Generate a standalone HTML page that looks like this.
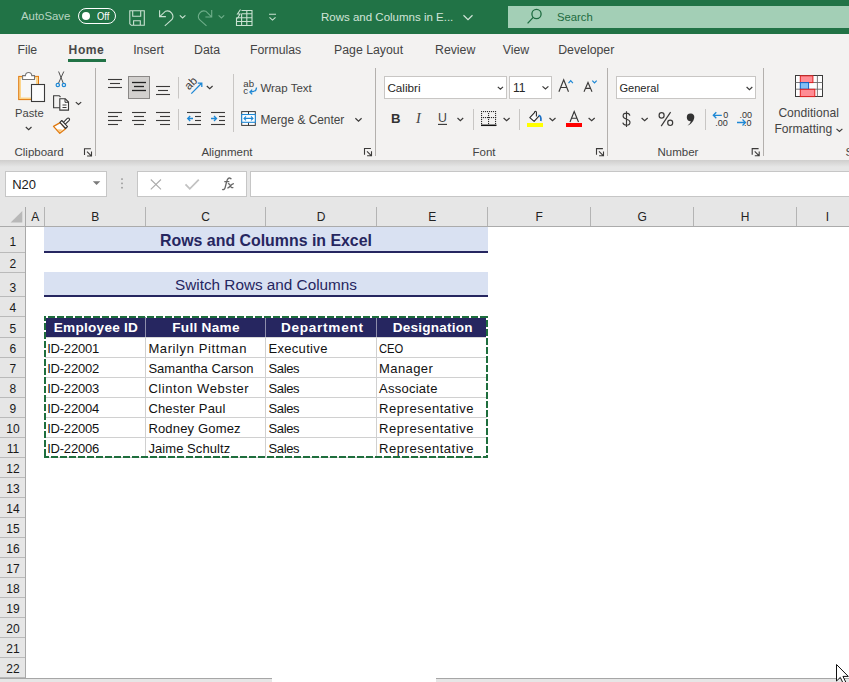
<!DOCTYPE html>
<html><head><meta charset="utf-8">
<style>
*{margin:0;padding:0;box-sizing:border-box}
html,body{width:849px;height:682px;overflow:hidden;background:#fff;font-family:"Liberation Sans",sans-serif}
.a{position:absolute}
.t{position:absolute;white-space:nowrap;line-height:1}
svg{position:absolute;left:0;top:0}
</style></head><body>
<div class="a" style="left:0px;top:0px;width:849px;height:34px;background:#217346;"></div>
<div class="a" style="left:0px;top:34px;width:849px;height:126px;background:#f3f2f1;"></div>
<div class="a" style="left:0px;top:160px;width:849px;height:7px;background:linear-gradient(#cfcecd,#e6e6e6);"></div>
<div class="a" style="left:0px;top:167px;width:849px;height:40px;background:#e6e6e6;"></div>
<div class="a" style="left:508px;top:6px;width:341px;height:22px;background:#a3cfb6;"></div>
<div class="a" style="left:78px;top:8px;width:38px;height:16px;background:transparent;border:1.4px solid #fff;border-radius:8px;"></div>
<div class="a" style="left:81.5px;top:12px;width:8px;height:8px;background:#fff;border-radius:50%;"></div>
<div class="t" style="left:21.00px;top:11.05px;font-size:11.4px;color:#b8d5c2;">AutoSave</div>
<div class="t" style="left:97.20px;top:12.37px;font-size:10.2px;color:#fff;transform-origin:0 0;transform: scaleX(0.92);">Off</div>
<div class="t" style="left:321.00px;top:11.87px;font-size:11.5px;color:#d2e5d9;">Rows and Columns in E...</div>
<div class="t" style="left:557.00px;top:12.03px;font-size:11.3px;color:#1d6b40;">Search</div>
<div class="t" style="left:17.40px;top:43.99px;font-size:12.3px;color:#444;">File</div>
<div class="t" style="left:133.20px;top:43.99px;font-size:12.3px;color:#444;">Insert</div>
<div class="t" style="left:194.00px;top:43.99px;font-size:12.3px;color:#444;">Data</div>
<div class="t" style="left:250.00px;top:43.99px;font-size:12.3px;color:#444;">Formulas</div>
<div class="t" style="left:334.00px;top:43.99px;font-size:12.3px;color:#444;">Page Layout</div>
<div class="t" style="left:435.00px;top:43.99px;font-size:12.3px;color:#444;">Review</div>
<div class="t" style="left:502.80px;top:43.99px;font-size:12.3px;color:#444;">View</div>
<div class="t" style="left:558.20px;top:43.99px;font-size:12.3px;color:#444;">Developer</div>
<div class="t" style="left:68.60px;top:44.16px;font-size:12.1px;color:#484848;font-weight:bold;letter-spacing:0.55px;">Home</div>
<div class="a" style="left:68px;top:59px;width:38px;height:3px;background:#217346;"></div>
<div class="t" style="left:15.00px;top:107.52px;font-size:11.2px;color:#444;">Paste</div>
<div class="t" style="left:14.50px;top:147.27px;font-size:11.5px;color:#444;">Clipboard</div>
<div class="t" style="left:201.40px;top:147.27px;font-size:11.5px;color:#444;">Alignment</div>
<div class="t" style="left:472.50px;top:147.27px;font-size:11.5px;color:#444;">Font</div>
<div class="t" style="left:657.50px;top:147.27px;font-size:11.5px;color:#444;">Number</div>
<div class="t" style="left:260.40px;top:82.67px;font-size:11.5px;color:#444;">Wrap Text</div>
<div class="t" style="left:260.40px;top:114.93px;font-size:11.9px;color:#444;">Merge &amp; Center</div>
<div class="t" style="left:778.40px;top:107.06px;font-size:12.1px;color:#444;">Conditional</div>
<div class="t" style="left:774.40px;top:123.26px;font-size:12.1px;color:#444;">Formatting</div>
<div class="a" style="left:384px;top:76px;width:123px;height:23px;background:#fff;border:1px solid #c8c6c4;"></div>
<div class="a" style="left:509px;top:76px;width:43px;height:23px;background:#fff;border:1px solid #c8c6c4;"></div>
<div class="a" style="left:616px;top:76px;width:140px;height:23px;background:#fff;border:1px solid #c8c6c4;"></div>
<div class="t" style="left:387.40px;top:82.00px;font-size:11.7px;color:#262626;">Calibri</div>
<div class="t" style="left:513.00px;top:81.84px;font-size:12px;color:#262626;">11</div>
<div class="t" style="left:619.40px;top:82.90px;font-size:11.1px;color:#262626;">General</div>
<div class="a" style="left:95px;top:68px;width:1px;height:88px;background:#b3b0ad;"></div>
<div class="a" style="left:375px;top:68px;width:1px;height:88px;background:#b3b0ad;"></div>
<div class="a" style="left:607px;top:68px;width:1px;height:88px;background:#b3b0ad;"></div>
<div class="a" style="left:763px;top:68px;width:1px;height:88px;background:#b3b0ad;"></div>
<div class="a" style="left:233px;top:74px;width:1px;height:58px;background:#c8c6c4;"></div>
<div class="a" style="left:5px;top:171px;width:102px;height:26px;background:#fff;border:1px solid #c6c6c6;"></div>
<div class="a" style="left:137px;top:171px;width:110px;height:26px;background:#fff;border:1px solid #c6c6c6;"></div>
<div class="a" style="left:250px;top:171px;width:599px;height:26px;background:#fff;border:1px solid #c6c6c6;border-right:none;"></div>
<div class="t" style="left:12.20px;top:178.00px;font-size:13px;color:#1a1a1a;">N20</div>
<div class="a" style="left:0px;top:207px;width:849px;height:20px;background:#e6e6e6;border-bottom:1px solid #ababab;"></div>
<div class="a" style="left:0px;top:227px;width:26px;height:455px;background:#e6e6e6;border-right:1px solid #a9a9a9;"></div>
<div class="a" style="left:25px;top:207px;width:1px;height:20px;background:#a9a9a9;"></div>
<div class="t" style="left:35.20px;top:210.64px;font-size:12px;color:#222;transform:translateX(-50%);">A</div>
<div class="t" style="left:95.20px;top:210.64px;font-size:12px;color:#222;transform:translateX(-50%);">B</div>
<div class="a" style="left:44px;top:207px;width:1px;height:19px;background:#b4b4b4;"></div>
<div class="t" style="left:205.70px;top:210.64px;font-size:12px;color:#222;transform:translateX(-50%);">C</div>
<div class="a" style="left:145px;top:207px;width:1px;height:19px;background:#b4b4b4;"></div>
<div class="t" style="left:321.20px;top:210.64px;font-size:12px;color:#222;transform:translateX(-50%);">D</div>
<div class="a" style="left:265px;top:207px;width:1px;height:19px;background:#b4b4b4;"></div>
<div class="t" style="left:432.20px;top:210.64px;font-size:12px;color:#222;transform:translateX(-50%);">E</div>
<div class="a" style="left:376px;top:207px;width:1px;height:19px;background:#b4b4b4;"></div>
<div class="t" style="left:539.20px;top:210.64px;font-size:12px;color:#222;transform:translateX(-50%);">F</div>
<div class="a" style="left:487px;top:207px;width:1px;height:19px;background:#b4b4b4;"></div>
<div class="t" style="left:642.20px;top:210.64px;font-size:12px;color:#222;transform:translateX(-50%);">G</div>
<div class="a" style="left:590px;top:207px;width:1px;height:19px;background:#b4b4b4;"></div>
<div class="t" style="left:745.20px;top:210.64px;font-size:12px;color:#222;transform:translateX(-50%);">H</div>
<div class="a" style="left:693px;top:207px;width:1px;height:19px;background:#b4b4b4;"></div>
<div class="t" style="left:827.50px;top:210.64px;font-size:12px;color:#222;transform:translateX(-50%);">I</div>
<div class="a" style="left:796px;top:207px;width:1px;height:19px;background:#b4b4b4;"></div>
<div class="a" style="left:0px;top:252px;width:25px;height:1px;background:#bababa;"></div>
<div class="t" style="left:12.90px;top:236.34px;font-size:12px;color:#1a1a1a;transform:translateX(-50%);">1</div>
<div class="a" style="left:0px;top:272px;width:25px;height:1px;background:#bababa;"></div>
<div class="t" style="left:12.90px;top:257.54px;font-size:12px;color:#1a1a1a;transform:translateX(-50%);">2</div>
<div class="a" style="left:0px;top:296px;width:25px;height:1px;background:#bababa;"></div>
<div class="t" style="left:12.90px;top:281.54px;font-size:12px;color:#1a1a1a;transform:translateX(-50%);">3</div>
<div class="a" style="left:0px;top:316px;width:25px;height:1px;background:#bababa;"></div>
<div class="t" style="left:12.90px;top:301.54px;font-size:12px;color:#1a1a1a;transform:translateX(-50%);">4</div>
<div class="a" style="left:0px;top:337px;width:25px;height:1px;background:#bababa;"></div>
<div class="t" style="left:12.90px;top:322.54px;font-size:12px;color:#1a1a1a;transform:translateX(-50%);">5</div>
<div class="a" style="left:0px;top:357px;width:25px;height:1px;background:#bababa;"></div>
<div class="t" style="left:12.90px;top:342.54px;font-size:12px;color:#1a1a1a;transform:translateX(-50%);">6</div>
<div class="a" style="left:0px;top:377px;width:25px;height:1px;background:#bababa;"></div>
<div class="t" style="left:12.90px;top:362.54px;font-size:12px;color:#1a1a1a;transform:translateX(-50%);">7</div>
<div class="a" style="left:0px;top:397px;width:25px;height:1px;background:#bababa;"></div>
<div class="t" style="left:12.90px;top:382.54px;font-size:12px;color:#1a1a1a;transform:translateX(-50%);">8</div>
<div class="a" style="left:0px;top:417px;width:25px;height:1px;background:#bababa;"></div>
<div class="t" style="left:12.90px;top:402.54px;font-size:12px;color:#1a1a1a;transform:translateX(-50%);">9</div>
<div class="a" style="left:0px;top:437px;width:25px;height:1px;background:#bababa;"></div>
<div class="t" style="left:12.90px;top:422.54px;font-size:12px;color:#1a1a1a;transform:translateX(-50%);">10</div>
<div class="a" style="left:0px;top:457px;width:25px;height:1px;background:#bababa;"></div>
<div class="t" style="left:12.90px;top:442.54px;font-size:12px;color:#1a1a1a;transform:translateX(-50%);">11</div>
<div class="a" style="left:0px;top:477px;width:25px;height:1px;background:#bababa;"></div>
<div class="t" style="left:12.90px;top:462.54px;font-size:12px;color:#1a1a1a;transform:translateX(-50%);">12</div>
<div class="a" style="left:0px;top:497px;width:25px;height:1px;background:#bababa;"></div>
<div class="t" style="left:12.90px;top:482.54px;font-size:12px;color:#1a1a1a;transform:translateX(-50%);">13</div>
<div class="a" style="left:0px;top:517px;width:25px;height:1px;background:#bababa;"></div>
<div class="t" style="left:12.90px;top:502.54px;font-size:12px;color:#1a1a1a;transform:translateX(-50%);">14</div>
<div class="a" style="left:0px;top:537px;width:25px;height:1px;background:#bababa;"></div>
<div class="t" style="left:12.90px;top:522.54px;font-size:12px;color:#1a1a1a;transform:translateX(-50%);">15</div>
<div class="a" style="left:0px;top:557px;width:25px;height:1px;background:#bababa;"></div>
<div class="t" style="left:12.90px;top:542.54px;font-size:12px;color:#1a1a1a;transform:translateX(-50%);">16</div>
<div class="a" style="left:0px;top:577px;width:25px;height:1px;background:#bababa;"></div>
<div class="t" style="left:12.90px;top:562.54px;font-size:12px;color:#1a1a1a;transform:translateX(-50%);">17</div>
<div class="a" style="left:0px;top:597px;width:25px;height:1px;background:#bababa;"></div>
<div class="t" style="left:12.90px;top:582.54px;font-size:12px;color:#1a1a1a;transform:translateX(-50%);">18</div>
<div class="a" style="left:0px;top:617px;width:25px;height:1px;background:#bababa;"></div>
<div class="t" style="left:12.90px;top:602.54px;font-size:12px;color:#1a1a1a;transform:translateX(-50%);">19</div>
<div class="a" style="left:0px;top:637px;width:25px;height:1px;background:#bababa;"></div>
<div class="t" style="left:12.90px;top:622.54px;font-size:12px;color:#1a1a1a;transform:translateX(-50%);">20</div>
<div class="a" style="left:0px;top:657px;width:25px;height:1px;background:#bababa;"></div>
<div class="t" style="left:12.90px;top:642.54px;font-size:12px;color:#1a1a1a;transform:translateX(-50%);">21</div>
<div class="a" style="left:0px;top:677px;width:25px;height:1px;background:#bababa;"></div>
<div class="t" style="left:12.90px;top:662.54px;font-size:12px;color:#1a1a1a;transform:translateX(-50%);">22</div>
<div class="a" style="left:44px;top:227px;width:444px;height:24px;background:#d9e1f2;"></div>
<div class="a" style="left:44px;top:251px;width:444px;height:2px;background:#262660;"></div>
<div class="a" style="left:44px;top:272px;width:444px;height:23px;background:#d9e1f2;"></div>
<div class="a" style="left:44px;top:295px;width:444px;height:2px;background:#262660;"></div>
<div class="t" style="left:266.00px;top:232.74px;font-size:15.9px;color:#262660;font-weight:bold;transform:translateX(-50%);">Rows and Columns in Excel</div>
<div class="t" style="left:266.00px;top:277.05px;font-size:15.3px;color:#262660;transform:translateX(-50%);">Switch Rows and Columns</div>
<div class="a" style="left:46px;top:318px;width:440px;height:19px;background:#262660;"></div>
<div class="a" style="left:46px;top:337px;width:440px;height:1px;background:#d8d8d8;"></div>
<div class="t" style="left:53.80px;top:321.39px;font-size:13.6px;color:#fff;font-weight:bold;letter-spacing:0.25px;">Employee ID</div>
<div class="t" style="left:172.20px;top:321.39px;font-size:13.6px;color:#fff;font-weight:bold;letter-spacing:0.299px;">Full Name</div>
<div class="t" style="left:280.90px;top:321.39px;font-size:13.6px;color:#fff;font-weight:bold;letter-spacing:0.728px;">Department</div>
<div class="t" style="left:392.80px;top:321.39px;font-size:13.6px;color:#fff;font-weight:bold;letter-spacing:0.204px;">Designation</div>
<div class="a" style="left:45px;top:357px;width:442px;height:1px;background:#d0d0d0;"></div>
<div class="t" style="left:47.20px;top:342.30px;font-size:13px;color:#111;letter-spacing:-0.214px;">ID-22001</div>
<div class="t" style="left:148.40px;top:342.30px;font-size:13px;color:#111;letter-spacing:0.602px;">Marilyn Pittman</div>
<div class="t" style="left:268.40px;top:342.30px;font-size:13px;color:#111;letter-spacing:0.331px;">Executive</div>
<div class="t" style="left:379.10px;top:342.30px;font-size:13px;color:#111;transform-origin:0 0;transform: scaleX(0.8634);">CEO</div>
<div class="a" style="left:45px;top:377px;width:442px;height:1px;background:#d0d0d0;"></div>
<div class="t" style="left:47.20px;top:362.30px;font-size:13px;color:#111;letter-spacing:-0.214px;">ID-22002</div>
<div class="t" style="left:148.40px;top:362.30px;font-size:13px;color:#111;letter-spacing:0.023px;">Samantha Carson</div>
<div class="t" style="left:268.40px;top:362.30px;font-size:13px;color:#111;letter-spacing:-0.325px;">Sales</div>
<div class="t" style="left:379.10px;top:362.30px;font-size:13px;color:#111;letter-spacing:0.402px;">Manager</div>
<div class="a" style="left:45px;top:397px;width:442px;height:1px;background:#d0d0d0;"></div>
<div class="t" style="left:47.20px;top:382.30px;font-size:13px;color:#111;letter-spacing:-0.214px;">ID-22003</div>
<div class="t" style="left:148.40px;top:382.30px;font-size:13px;color:#111;letter-spacing:0.576px;">Clinton Webster</div>
<div class="t" style="left:268.40px;top:382.30px;font-size:13px;color:#111;letter-spacing:-0.325px;">Sales</div>
<div class="t" style="left:379.10px;top:382.30px;font-size:13px;color:#111;letter-spacing:0.243px;">Associate</div>
<div class="a" style="left:45px;top:417px;width:442px;height:1px;background:#d0d0d0;"></div>
<div class="t" style="left:47.20px;top:402.30px;font-size:13px;color:#111;letter-spacing:-0.214px;">ID-22004</div>
<div class="t" style="left:148.40px;top:402.30px;font-size:13px;color:#111;letter-spacing:0.16px;">Chester Paul</div>
<div class="t" style="left:268.40px;top:402.30px;font-size:13px;color:#111;letter-spacing:-0.325px;">Sales</div>
<div class="t" style="left:379.10px;top:402.30px;font-size:13px;color:#111;letter-spacing:0.529px;">Representative</div>
<div class="a" style="left:45px;top:437px;width:442px;height:1px;background:#d0d0d0;"></div>
<div class="t" style="left:47.20px;top:422.30px;font-size:13px;color:#111;letter-spacing:-0.214px;">ID-22005</div>
<div class="t" style="left:148.40px;top:422.30px;font-size:13px;color:#111;letter-spacing:0.168px;">Rodney Gomez</div>
<div class="t" style="left:268.40px;top:422.30px;font-size:13px;color:#111;letter-spacing:-0.325px;">Sales</div>
<div class="t" style="left:379.10px;top:422.30px;font-size:13px;color:#111;letter-spacing:0.529px;">Representative</div>
<div class="a" style="left:45px;top:457px;width:442px;height:1px;background:#d0d0d0;"></div>
<div class="t" style="left:47.20px;top:442.30px;font-size:13px;color:#111;letter-spacing:-0.214px;">ID-22006</div>
<div class="t" style="left:148.40px;top:442.30px;font-size:13px;color:#111;letter-spacing:0.073px;">Jaime Schultz</div>
<div class="t" style="left:268.40px;top:442.30px;font-size:13px;color:#111;letter-spacing:-0.325px;">Sales</div>
<div class="t" style="left:379.10px;top:442.30px;font-size:13px;color:#111;letter-spacing:0.529px;">Representative</div>
<div class="a" style="left:145px;top:317px;width:1px;height:20px;background:#8d8dab;"></div>
<div class="a" style="left:145px;top:338px;width:1px;height:119px;background:#d0d0d0;"></div>
<div class="a" style="left:265px;top:317px;width:1px;height:20px;background:#8d8dab;"></div>
<div class="a" style="left:265px;top:338px;width:1px;height:119px;background:#d0d0d0;"></div>
<div class="a" style="left:376px;top:317px;width:1px;height:20px;background:#8d8dab;"></div>
<div class="a" style="left:376px;top:338px;width:1px;height:119px;background:#d0d0d0;"></div>
<div class="a" style="left:0px;top:678px;width:272px;height:4px;background:#e6e6e6;border-top:1px solid #a6a6a6;"></div>
<div class="a" style="left:436px;top:678px;width:413px;height:4px;background:#e6e6e6;border-top:1px solid #a6a6a6;"></div>
<div class="a" style="left:527px;top:123px;width:16px;height:4px;background:#ffff00;"></div>
<div class="a" style="left:566px;top:123px;width:16px;height:4px;background:#ff0000;"></div>
<div class="t" style="left:845.50px;top:147.27px;font-size:11.5px;color:#444;">S</div>
<svg width="849" height="682" viewBox="0 0 849 682">
<g fill="none" stroke="#c9e1d1" stroke-width="1.1">
<path d="M129.8 10.8h14.5v14.5h-13l-1.5-1.5z M132.7 10.8v5.4h8v-5.4 M133.6 25.3v-4.6h6.7v4.6"/>
<path d="M159.6 10.3v6.3h6.3 M160 16.3 L165.5 11.2 A5.6 5.6 0 0 1 172 19.5 L164.8 25.8"/>
<path d="M179.8 15.3l2.8 2.6 2.8-2.6"/>
</g>
<g fill="none" stroke="#6fae8a" stroke-width="1.1">
<path d="M211.7 10v7h-6.3 M211.3 16.7 L205.8 11.2 A5.6 5.6 0 0 0 199.3 19.5 L206.5 25.8"/>
<path d="M218.6 15.3l2.8 2.6 2.8-2.6"/>
</g>
<g fill="none" stroke="#c9e1d1" stroke-width="1.1">
<path d="M241.5 10.5h10.5v15h-15.5v-8 M236.5 17.7h15.5 M236.5 21.5h15.5 M241.6 13.8v11.7 M246.8 10.5v15 M241.6 13.8h10.4"/>
<path d="M240.5 9.5l-3 4.5h2.5l-2.5 4.5" />
<path d="M269 14.3h7 M269.5 17.3l3 2.8 3-2.8"/>
</g>
<g fill="none" stroke="#1d6b40" stroke-width="1.3"><circle cx="536.5" cy="14" r="4.6"/><path d="M533.2 17.4l-5.6 6"/></g>
<path d="M463.5 15.3l4.5 4.3 4.5-4.3" fill="none" stroke="#d2e5d9" stroke-width="1.2"/>
<rect x="18.7" y="76.4" width="19.8" height="23.2" fill="#fcd58c" stroke="#e07a10" stroke-width="1"/>
<rect x="21" y="78.5" width="15" height="19" fill="#f7f7f7"/>
<path d="M22.6 75.6h2.9a3.1 3.1 0 0 1 6.2 0h2.8v3.9h-11.9z" fill="#fff" stroke="#767676" stroke-width="1.05"/>
<rect x="31.5" y="84.5" width="13" height="17" fill="#fbfbfb" stroke="#3a3a3a" stroke-width="1.1"/>
<path d="M25.8 127.02L28.65 129.58L31.5 127.02" fill="none" stroke="#3b3a39" stroke-width="1.2"/>
<path d="M58.6 71.5L63.2 83 M63.8 71.5L58.6 83" fill="none" stroke="#505050" stroke-width="1"/>
<circle cx="57.8" cy="85" r="1.7" fill="none" stroke="#1e88d5" stroke-width="1.2"/><circle cx="63.9" cy="85" r="1.7" fill="none" stroke="#1e88d5" stroke-width="1.2"/>
<path d="M60.3 107.8H53.6V95.7h5.6l1.3 1.3" fill="none" stroke="#3a3a3a" stroke-width="1.1"/>
<path d="M59.8 98.8h5.5l3.2 3.2v8.1H59.8z" fill="#fbfbfb" stroke="#3a3a3a" stroke-width="1.1"/>
<path d="M65 98.8v3.5h3.5 M62.5 105h4 M62.5 107.5h4" fill="none" stroke="#3a3a3a" stroke-width="1"/>
<path d="M75.8 102.08L78.50 104.52L81.2 102.08" fill="none" stroke="#3b3a39" stroke-width="1.2"/>
<path d="M53.5 126.4L60.2 122.6 65.6 128.7 59.8 133.2Z" fill="#fff" stroke="#e07a10" stroke-width="1.3" stroke-linejoin="round"/>
<path d="M56.8 129.3L62.6 129.6 59.9 132.4Z" fill="#fcc77c"/>
<path d="M63.4 122.3L67.3 118.4A1.35 1.35 0 0 1 69.2 120.3L65.3 124.2" fill="#fff" stroke="#333" stroke-width="1.1"/>
<path d="M59.9 122.4L61.8 120.5 67.5 126.6 65.6 128.5Z" fill="#fff" stroke="#333" stroke-width="1.1" stroke-linejoin="round"/>
<path d="M84.5 155.0V148.8h6.4" fill="none" stroke="#3b3a39" stroke-width="1.1"/>
<path d="M87.0 151.60000000000002L91.0 155.60000000000002 M91.5 151.60000000000002v4.4h-4.4" fill="none" stroke="#3b3a39" stroke-width="1.1"/>
<path d="M108 79.5H122" stroke="#3b3a39" stroke-width="1.1"/>
<path d="M110 83.5H120" stroke="#3b3a39" stroke-width="1.1"/>
<path d="M108 87.5H122" stroke="#3b3a39" stroke-width="1.1"/>
<path d="M156 86.5H170" stroke="#3b3a39" stroke-width="1.1"/>
<path d="M158 90.5H168" stroke="#3b3a39" stroke-width="1.1"/>
<path d="M156 94.5H170" stroke="#3b3a39" stroke-width="1.1"/>
<rect x="128.5" y="76.5" width="21" height="22" fill="#d2d0ce" stroke="#8a8886" stroke-width="1"/>
<path d="M132 82.5H146" stroke="#222" stroke-width="1.3"/>
<path d="M134 86.5H144" stroke="#222" stroke-width="1.3"/>
<path d="M132 90.5H146" stroke="#222" stroke-width="1.3"/>
<path d="M108 112.5H122" stroke="#3b3a39" stroke-width="1.1"/>
<path d="M108 116.5H118" stroke="#3b3a39" stroke-width="1.1"/>
<path d="M108 120.5H122" stroke="#3b3a39" stroke-width="1.1"/>
<path d="M108 124.5H118" stroke="#3b3a39" stroke-width="1.1"/>
<path d="M132 112.5H146" stroke="#3b3a39" stroke-width="1.1"/>
<path d="M134 116.5H144" stroke="#3b3a39" stroke-width="1.1"/>
<path d="M132 120.5H146" stroke="#3b3a39" stroke-width="1.1"/>
<path d="M134 124.5H144" stroke="#3b3a39" stroke-width="1.1"/>
<path d="M156 112.5H170" stroke="#3b3a39" stroke-width="1.1"/>
<path d="M160 116.5H170" stroke="#3b3a39" stroke-width="1.1"/>
<path d="M156 120.5H170" stroke="#3b3a39" stroke-width="1.1"/>
<path d="M160 124.5H170" stroke="#3b3a39" stroke-width="1.1"/>
<text x="0" y="0" transform="translate(189 90.4) rotate(-45)" font-family="Liberation Sans" font-size="11.5" fill="#3b3a39">ab</text>
<path d="M191.3 93.6L201.6 83.3 M197.8 83.1h4v4" fill="none" stroke="#1e88d5" stroke-width="1.3"/>
<path d="M206.8 86.00L209.70 88.60L212.6 86.00" fill="none" stroke="#3b3a39" stroke-width="1.2"/>
<path d="M178.5 77v21.5 M178.5 109v21 M473.5 109v21 M519.5 109v21 M705.5 109v21" stroke="#c8c6c4" stroke-width="1"/>
<path d="M187 112.5H201" stroke="#3b3a39" stroke-width="1.1"/>
<path d="M195 116.5H201" stroke="#3b3a39" stroke-width="1.1"/>
<path d="M195 120.5H201" stroke="#3b3a39" stroke-width="1.1"/>
<path d="M187 124.5H201" stroke="#3b3a39" stroke-width="1.1"/>
<path d="M193 118.5H187.7 M190.2 116l-2.5 2.5 2.5 2.5" fill="none" stroke="#1e88d5" stroke-width="1.3"/>
<path d="M211 112.5H225" stroke="#3b3a39" stroke-width="1.1"/>
<path d="M219 116.5H225" stroke="#3b3a39" stroke-width="1.1"/>
<path d="M219 120.5H225" stroke="#3b3a39" stroke-width="1.1"/>
<path d="M211 124.5H225" stroke="#3b3a39" stroke-width="1.1"/>
<path d="M211 118.5H216.6 M214 116l2.5 2.5-2.5 2.5" fill="none" stroke="#1e88d5" stroke-width="1.3"/>
<text x="243.3" y="86.6" font-family="Liberation Sans" font-size="9.6" fill="#3b3a39">ab</text>
<text x="243.3" y="93.6" font-family="Liberation Sans" font-size="9.6" fill="#3b3a39">c</text>
<path d="M256.5 87.5c0 2.5-2 4.5-6.3 4.5 M252.2 89.6l-2.3 2.4 2.3 2.4" fill="none" stroke="#1e88d5" stroke-width="1.3"/>
<rect x="241.7" y="111.6" width="13.6" height="13.8" fill="#fff" stroke="#3a3a3a" stroke-width="1"/>
<path d="M248.5 111.6v2.5 M248.5 122.5v3" stroke="#3a3a3a" stroke-width="1"/>
<rect x="241.7" y="114.5" width="13.6" height="7.8" fill="#fff" stroke="#1e88d5" stroke-width="1.1"/>
<path d="M244 118.4h9 M246 116.4l-2 2 2 2 M251 116.4l2 2-2 2" fill="none" stroke="#1e88d5" stroke-width="1.1"/>
<path d="M355.4 118.30L358.50 121.10L361.6 118.30" fill="none" stroke="#3b3a39" stroke-width="1.2"/>
<path d="M364.5 154.7V148.5h6.4" fill="none" stroke="#3b3a39" stroke-width="1.1"/>
<path d="M367.0 151.3L371.0 155.3 M371.5 151.3v4.4h-4.4" fill="none" stroke="#3b3a39" stroke-width="1.1"/>
<path d="M497.8 86.83L500.40 89.17L503 86.83" fill="none" stroke="#3b3a39" stroke-width="1.2"/>
<path d="M542.5 86.37L545.45 89.03L548.4 86.37" fill="none" stroke="#3b3a39" stroke-width="1.2"/>
<text x="391" y="122.8" font-family="Liberation Sans" font-weight="bold" font-size="13.2" fill="#333">B</text>
<text x="416" y="122.8" font-family="Liberation Serif" font-style="italic" font-size="14.5" fill="#444">I</text>
<text x="438" y="121.8" font-family="Liberation Sans" font-size="12.3" fill="#444">U</text>
<path d="M438 124.4H447" stroke="#333" stroke-width="1.1"/>
<path d="M457.5 118.02L460.35 120.58L463.2 118.02" fill="none" stroke="#3b3a39" stroke-width="1.2"/>
<g fill="#2a2a2a"><rect x="481" y="111" width="1.1" height="1.1"/><rect x="481" y="117" width="1.1" height="1.1"/><rect x="483" y="111" width="1.1" height="1.1"/><rect x="483" y="117" width="1.1" height="1.1"/><rect x="485" y="111" width="1.1" height="1.1"/><rect x="485" y="117" width="1.1" height="1.1"/><rect x="487" y="111" width="1.1" height="1.1"/><rect x="487" y="117" width="1.1" height="1.1"/><rect x="489" y="111" width="1.1" height="1.1"/><rect x="489" y="117" width="1.1" height="1.1"/><rect x="491" y="111" width="1.1" height="1.1"/><rect x="491" y="117" width="1.1" height="1.1"/><rect x="493" y="111" width="1.1" height="1.1"/><rect x="493" y="117" width="1.1" height="1.1"/><rect x="495" y="111" width="1.1" height="1.1"/><rect x="495" y="117" width="1.1" height="1.1"/><rect x="481" y="113" width="1.1" height="1.1"/><rect x="495" y="113" width="1.1" height="1.1"/><rect x="481" y="115" width="1.1" height="1.1"/><rect x="495" y="115" width="1.1" height="1.1"/><rect x="481" y="117" width="1.1" height="1.1"/><rect x="495" y="117" width="1.1" height="1.1"/><rect x="481" y="119" width="1.1" height="1.1"/><rect x="495" y="119" width="1.1" height="1.1"/><rect x="481" y="121" width="1.1" height="1.1"/><rect x="495" y="121" width="1.1" height="1.1"/><rect x="481" y="123" width="1.1" height="1.1"/><rect x="495" y="123" width="1.1" height="1.1"/><rect x="488" y="113" width="1.1" height="1.1"/><rect x="488" y="115" width="1.1" height="1.1"/><rect x="488" y="117" width="1.1" height="1.1"/><rect x="488" y="119" width="1.1" height="1.1"/><rect x="488" y="121" width="1.1" height="1.1"/><rect x="488" y="123" width="1.1" height="1.1"/></g>
<path d="M481 125.3H496.5" stroke="#111" stroke-width="1.5"/>
<path d="M503.6 117.95L506.60 120.65L509.6 117.95" fill="none" stroke="#3b3a39" stroke-width="1.2"/>
<path d="M538.9 116.2L534.1 121.4 529.8 117.7 534.5 112.6 V112.2 A0.95 0.95 0 0 1 536.4 112.2 V116.5" fill="#fafafa" stroke="#2a2a2a" stroke-width="1.1" stroke-linejoin="round"/>
<path d="M538.6 115.3Q541.6 116.2 540.8 121" fill="none" stroke="#1a6fc4" stroke-width="1.7"/>
<path d="M549.5 117.95L552.50 120.65L555.5 117.95" fill="none" stroke="#3b3a39" stroke-width="1.2"/>
<path d="M570 122L574.2 111.5 578.5 122 M571.5 118.3h5.5" fill="none" stroke="#333" stroke-width="1.1"/>
<path d="M588.6 117.93L591.65 120.67L594.7 117.93" fill="none" stroke="#3b3a39" stroke-width="1.2"/>
<path d="M558.9 91.8L563.7 79.7 568.5 91.8 M560.5 87.5H566.9" fill="none" stroke="#3b3a39" stroke-width="1.15"/>
<path d="M568.5 83.2l2.2-2.5 2.2 2.5" fill="none" stroke="#1e88d5" stroke-width="1.2"/>
<path d="M584 91.8L588 82.5 592 91.8 M585.4 88.4H590.6" fill="none" stroke="#3b3a39" stroke-width="1.1"/>
<path d="M592.3 80.6l2.2 2.3 2.2-2.3" fill="none" stroke="#1e88d5" stroke-width="1.2"/>
<path d="M596.5 154.79999999999998V148.6h6.4" fill="none" stroke="#3b3a39" stroke-width="1.1"/>
<path d="M599.0 151.4L603.0 155.4 M603.5 151.4v4.4h-4.4" fill="none" stroke="#3b3a39" stroke-width="1.1"/>
<path d="M746.6 87.02L749.45 89.58L752.3 87.02" fill="none" stroke="#3b3a39" stroke-width="1.2"/>
<path d="M626.5 111.2V126.9 M629.9 115.6C629.5 113.9 628.2 113.1 626.5 113.1 624.4 113.1 623.1 114.3 623.1 116 623.1 120.2 630 118.4 630 122.2 630 124.1 628.5 125.2 626.5 125.2 624.6 125.2 623.2 124.3 622.8 122.6" fill="none" stroke="#3b3a39" stroke-width="1.15"/>
<path d="M641.6 118.03L644.65 120.77L647.7 118.03" fill="none" stroke="#3b3a39" stroke-width="1.2"/>
<g fill="none" stroke="#3b3a39" stroke-width="1.2"><ellipse cx="661.6" cy="115.4" rx="2.5" ry="2.7"/><ellipse cx="670.2" cy="122.8" rx="2.5" ry="2.7"/><path d="M670.6 112.2L661.2 126.2"/></g>
<path d="M690.5 113.6a3.2 3.2 0 0 1 3.8 3.5c0 3.5-3 7.2-6.8 8.6 1.8-1.5 3-3 3.3-4.4a3.2 3.2 0 0 1-0.3-7.7z" fill="#333"/>
<text x="723.3" y="117.7" font-family="Liberation Sans" font-size="9" fill="#333">0</text>
<text x="715.2" y="126" font-family="Liberation Sans" font-size="9" fill="#333">.00</text>
<path d="M721.8 115.3h-8.5 M716.3 112.3l-3 3 3 3" fill="none" stroke="#1e88d5" stroke-width="1.3"/>
<text x="739.5" y="117.7" font-family="Liberation Sans" font-size="9" fill="#333">.00</text>
<text x="744" y="126" font-family="Liberation Sans" font-size="9" fill="#333">.0</text>
<path d="M737 122.5h8.5 M742.5 119.5l3 3-3 3" fill="none" stroke="#1e88d5" stroke-width="1.3"/>
<path d="M752.2 154.79999999999998V148.6h6.4" fill="none" stroke="#3b3a39" stroke-width="1.1"/>
<path d="M754.7 151.4L758.7 155.4 M759.2 151.4v4.4h-4.4" fill="none" stroke="#3b3a39" stroke-width="1.1"/>
<rect x="795.5" y="75.5" width="27" height="21" fill="#fdfdfd" stroke="#3b3b3b" stroke-width="1"/>
<path d="M795.5 82.5h27 M795.5 89.2h27 M817.4 75.5v21" stroke="#6b6b6b" stroke-width="0.9"/>
<rect x="800.3" y="75.8" width="12.6" height="6.8" fill="#ff8c94" stroke="#e02020" stroke-width="1"/>
<rect x="800.3" y="82.6" width="8.3" height="6.6" fill="#82bff5" stroke="#0a64c8" stroke-width="1"/>
<rect x="800.3" y="89.3" width="14.5" height="7.3" fill="#ff8c94" stroke="#e02020" stroke-width="1"/>
<path d="M836.5 128.87L839.45 131.53L842.4 128.87" fill="none" stroke="#3b3a39" stroke-width="1.2"/>
<path d="M92.8 181.2h7.5l-3.75 3.8z" fill="#7a7a7a"/>
<g fill="#9a9a9a"><rect x="121.2" y="178.3" width="1.6" height="1.6"/><rect x="121.2" y="182.6" width="1.6" height="1.6"/><rect x="121.2" y="186.9" width="1.6" height="1.6"/></g>
<path d="M150.8 179.5l10.2 9.8 M161 179.5l-10.2 9.8" stroke="#ababab" stroke-width="1.1"/>
<path d="M185.5 184.3l4.3 4.5 9-9.2" fill="none" stroke="#c2c2c2" stroke-width="1.8"/>
<path d="M22.3 211v11.4H10.6z" fill="#b8b8b8"/>
<path d="M231.2 179.3C230.8 178 229.4 177.7 228.3 178.4 227.3 179.1 226.8 180.8 226.3 182.8L225.2 187.3C224.7 189.3 223.4 190.2 222.2 189.3 M224.3 181.6H229.3" fill="none" stroke="#666" stroke-width="1.35"/>
<path d="M227.9 183.8C229.3 183.4 229.9 184.3 230.4 185.8 230.9 187.3 231.6 188.1 233.4 187.5 M233.9 183.7C232.6 183.6 231.2 184.8 229.8 186.5 229 187.5 228.2 188 227.3 187.8" fill="none" stroke="#666" stroke-width="1.2"/>
<g stroke="#1e6e3d" stroke-width="2" fill="none">
<path d="M44 317H488" stroke-dasharray="7 2" stroke-dashoffset="-4"/>
<path d="M45 316V458" stroke-dasharray="7 2" stroke-dashoffset="-7"/>
<path d="M487 316V458" stroke-dasharray="7 2" stroke-dashoffset="-4"/>
<path d="M44 457H488" stroke-dasharray="7 2" stroke-dashoffset="-7"/>
</g>
<path d="M836.5 664.5v16.5l3.8-3.6 2.8 5.8 2.6-1.2-2.7-5.6h5.3z" fill="#fff" stroke="#111" stroke-width="1"/>
</svg>
</body></html>
